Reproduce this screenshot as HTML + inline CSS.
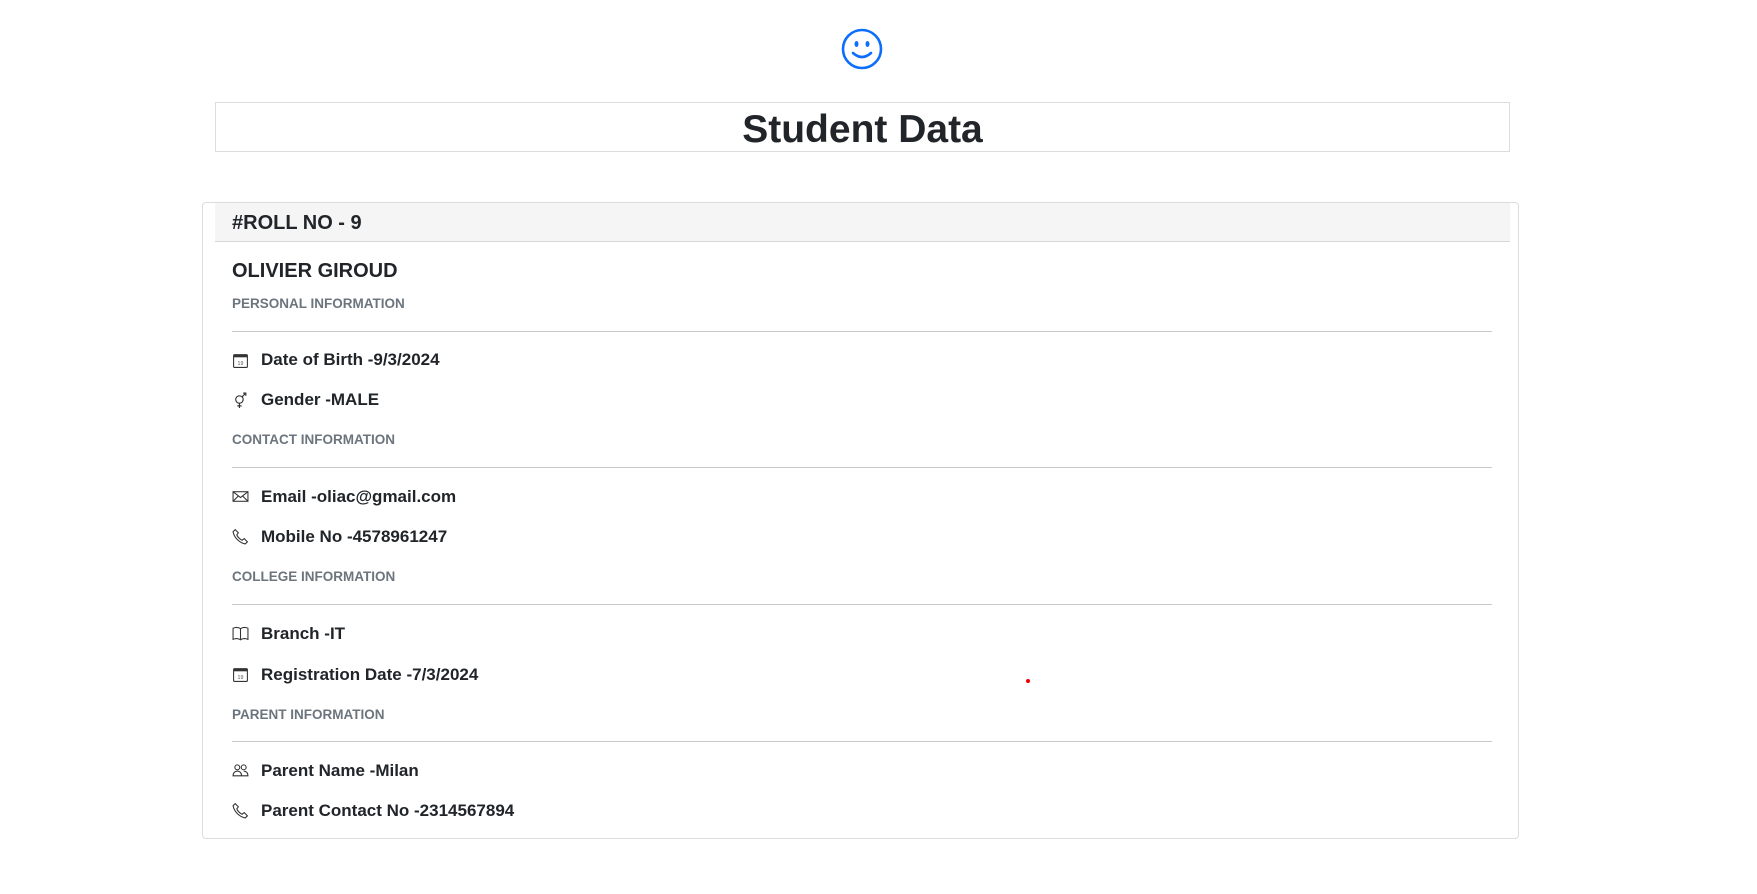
<!DOCTYPE html>
<html><head><meta charset="utf-8"><style>
*{margin:0;padding:0;box-sizing:border-box}
body{width:1757px;height:894px;background:#fff;font-family:"Liberation Sans",sans-serif;color:#212529;position:relative;overflow:hidden}
.a{position:absolute;white-space:nowrap}
.t{left:261px;font-size:17px;font-weight:bold;line-height:20px}
.s{left:232px;font-size:13.5px;font-weight:bold;color:#6c757d;line-height:16px}
.hr{position:absolute;left:232px;width:1260px;height:1px;background:#c8c8c8}
.ic{position:absolute;left:232px;width:17px;height:17px}
</style></head><body>
<svg class="a" style="left:841px;top:28px" width="42" height="42" viewBox="0 0 42 42"><circle cx="21" cy="21" r="19" fill="none" stroke="#0d6efd" stroke-width="2.6"/><ellipse cx="15.5" cy="16" rx="2" ry="3" fill="#0d6efd"/><ellipse cx="26.5" cy="16" rx="2" ry="3" fill="#0d6efd"/><path d="M12 25 Q21 33 30 25" fill="none" stroke="#0d6efd" stroke-width="2.6" stroke-linecap="round"/></svg>
<div class="a" style="left:215px;top:102px;width:1295px;height:50px;border:1.5px solid #dcdcdc;text-align:center;font-size:39px;font-weight:bold;line-height:54px">Student Data</div>
<div class="a" style="left:202px;top:202px;width:1317px;height:637px;border:1.5px solid #dcdcdc;border-radius:4px"></div>
<div class="a" style="left:215px;top:203px;width:1295px;height:39px;background:#f5f5f5;border-bottom:1.5px solid #d8d8d8"></div>
<div class="a" style="left:232px;top:212px;font-size:20px;font-weight:bold;line-height:22px">#ROLL NO - 9</div>
<div class="a" style="left:232px;top:260px;font-size:20px;font-weight:bold;line-height:22px">OLIVIER GIROUD</div>
<div class="a s" style="top:296px">PERSONAL INFORMATION</div>
<div class="hr" style="top:331px"></div>
<svg class="ic" style="top:352px" viewBox="0 0 16 16"><rect x="1.5" y="2.5" width="13" height="12" rx="1" fill="none" stroke="#333"/><rect x="1.5" y="2.5" width="13" height="2.5" fill="#333"/><text x="8" y="12" font-size="5" text-anchor="middle" fill="#555" font-family="Liberation Sans">19</text></svg>
<div class="a t" style="top:350px">Date of Birth -9/3/2024</div>
<svg class="ic" style="top:391px" viewBox="0 0 16 16"><circle cx="7" cy="8" r="3.5" fill="none" stroke="#333" stroke-width="1.1"/><path d="M7 11.5V16M5 14h4M9.5 5.5L13 2M10.5 2H13V4.5" fill="none" stroke="#333" stroke-width="1.1"/></svg>
<div class="a t" style="top:390px">Gender -MALE</div>
<div class="a s" style="top:432px">CONTACT INFORMATION</div>
<div class="hr" style="top:467px"></div>
<svg class="ic" style="top:488px" viewBox="0 0 16 16"><rect x="1" y="3.5" width="14" height="9" fill="none" stroke="#333"/><path d="M1 3.5L8 9l7-5.5M1 12.5l5-5M15 12.5l-5-5" fill="none" stroke="#333"/></svg>
<div class="a t" style="top:487px">Email -oliac@gmail.com</div>
<svg class="ic" style="top:528px" viewBox="0 0 16 16"><path d="M3 1.5l3 3-1.5 2c1 2.2 2.8 4 5 5l2-1.5 3 3-2 2C7 14 2 9 1 3.5z" fill="none" stroke="#333" stroke-width="1"/></svg>
<div class="a t" style="top:527px">Mobile No -4578961247</div>
<div class="a s" style="top:569px">COLLEGE INFORMATION</div>
<div class="hr" style="top:604px"></div>
<svg class="ic" style="top:625px" viewBox="0 0 16 16"><path d="M1 3c2.5-1 5-1 7 .5 2-1.5 4.5-1.5 7-.5v10.5c-2.5-1-5-1-7 .5-2-1.5-4.5-1.5-7-.5zM8 3.5V14" fill="none" stroke="#333"/></svg>
<div class="a t" style="top:624px">Branch -IT</div>
<svg class="ic" style="top:666px" viewBox="0 0 16 16"><rect x="1.5" y="2.5" width="13" height="12" rx="1" fill="none" stroke="#333"/><rect x="1.5" y="2.5" width="13" height="2.5" fill="#333"/><text x="8" y="12" font-size="5" text-anchor="middle" fill="#555" font-family="Liberation Sans">19</text></svg>
<div class="a t" style="top:665px">Registration Date -7/3/2024</div>
<div class="a" style="left:1026px;top:679px;width:4px;height:4px;border-radius:50%;background:#e00"></div>
<div class="a s" style="top:707px">PARENT INFORMATION</div>
<div class="hr" style="top:741px"></div>
<svg class="ic" style="top:762px" viewBox="0 0 16 16"><circle cx="5" cy="5" r="2.3" fill="none" stroke="#333"/><circle cx="11" cy="5" r="2.3" fill="none" stroke="#333"/><path d="M1 13c0-3 2-4.5 4-4.5s4 1.5 4 4.5zM9 13h6c0-3-2-4.5-4-4.5" fill="none" stroke="#333"/></svg>
<div class="a t" style="top:761px">Parent Name -Milan</div>
<svg class="ic" style="top:802px" viewBox="0 0 16 16"><path d="M3 1.5l3 3-1.5 2c1 2.2 2.8 4 5 5l2-1.5 3 3-2 2C7 14 2 9 1 3.5z" fill="none" stroke="#333" stroke-width="1"/></svg>
<div class="a t" style="top:801px">Parent Contact No -2314567894</div>
</body></html>
